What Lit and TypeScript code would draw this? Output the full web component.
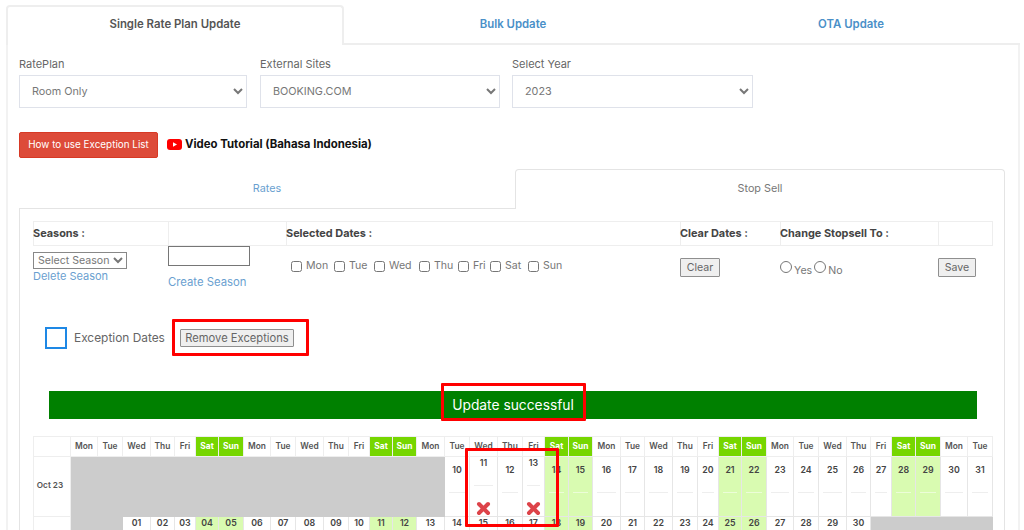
import { LitElement, html, css, svg } from "lit";
import { customElement } from "lit/decorators.js";

const NAMES = ["Mon", "Tue", "Wed", "Thu", "Fri", "Sat", "Sun"];
const WEEK_HEAD = Array.from({ length: 37 }, (_, i) => NAMES[i % 7]);
const isWeekend = (i: number) => i % 7 === 5 || i % 7 === 6;
const pad = (n: number) => String(n).padStart(2, "0");
const cross = svg`<line x1="3" y1="3" x2="12" y2="12"/><line x1="12" y1="3" x2="3" y2="12"/>`;

@customElement("app-root")
export class AppRoot extends LitElement {
  static styles = css`
    :host {
      display: block;
      width: 1024px;
      height: 530px;
      overflow: hidden;
      background: #fff;
      font-family: Inter, "Open Sans", sans-serif;
      color: #666;
      font-size: 11px;
    }
    .page { padding: 5px 4px 0 6px; }
    .tabs { display: flex; height: 40px; }
    .tab {
      flex: 1;
      display: flex;
      align-items: center;
      justify-content: center;
      font-weight: 600;
      font-size: 11.4px;
      color: #4a90c8;
      border-bottom: 2px solid #eee;
      box-sizing: border-box;
    }
    .tab.on {
      flex: 0 0 338px;
      color: #555;
      border: 2px solid #eee;
      border-bottom: 0;
      border-radius: 4px 4px 0 0;
      background: #fff;
      padding-bottom: 4px;
    }
    .panel {
      border-left: 2px solid #f2f2f2;
      border-right: 2px solid #f2f2f2;
      padding: 10px 13px 0 11px;
      height: 490px;
      box-sizing: border-box;
    }
    .form { display: flex; gap: 12px; }
    .field label { display: block; line-height: 18px; font-size: 11px; color: #666; margin-bottom: 2px; }
    .field select {
      display: block;
      height: 33px;
      box-sizing: border-box;
      background: #fff;
      border: 1.5px solid #dfe2ea;
      border-radius: 0;
      padding: 0 8px;
      font: inherit;
      font-size: 10.8px;
      color: #777;
    }
    .w1 { width: 228px; margin-right: 1px; }
    .w2 { width: 240px; }
    .w3 { width: 241px; }
    .help { display: flex; align-items: center; margin-top: 24px; height: 26px; }
    .help button {
      width: 139px;
      height: 26px;
      background: #dd4b39;
      border: 1px solid #d73925;
      border-radius: 2px;
      color: #fff;
      font: inherit;
      font-size: 9.9px;
      padding: 0 0 2px;
    }
    .help svg { margin: 0 3px 2px 9px; flex: none; }
    .video { font-weight: 700; color: #111; font-size: 11.4px; white-space: nowrap; padding-bottom: 2px; }
    .subtabs { display: flex; height: 40px; margin-top: 11px; width: 986px; }
    .sub {
      flex: 0 0 496px;
      display: flex;
      align-items: center;
      justify-content: center;
      box-sizing: border-box;
      color: #6a9fd0;
      font-size: 10.8px;
      border-bottom: 1px solid #e4e4e4;
    }
    .sub.on {
      flex: 0 0 490px;
      color: #777;
      border: 1px solid #e4e4e4;
      border-bottom: 0;
      border-radius: 4px 4px 0 0;
      padding-bottom: 2px;
    }
    .subpanel {
      width: 986px;
      box-sizing: border-box;
      border-left: 1px solid #e4e4e4;
      border-right: 1px solid #e4e4e4;
      padding: 12px 0 0 13px;
      height: 330px;
    }
    .controls {
      display: grid;
      grid-template-columns: 135px 118px 394px 100px 158px 55px;
      grid-template-rows: 25px 73px;
      width: 960px;
    }
    .controls .h {
      border: 1px solid #eee;
      border-right: 0;
      font-weight: 700;
      font-size: 10.9px;
      color: #444;
      display: flex;
      align-items: center;
      white-space: nowrap;
      text-indent: -1px;
      padding-bottom: 1px;
      box-sizing: border-box;
    }
    .controls .h:nth-child(6) { border-right: 1px solid #eee; }
    .seasons { padding-top: 6px; }
    .seasons select {
      display: block;
      width: 94px;
      height: 17px;
      font: inherit;
      font-size: 10.6px;
      color: #777;
      padding: 0;
      border: 1px solid #888;
      border-radius: 0;
      background: #fff;
    }
    a { color: #6a9fd0; font-size: 11px; text-decoration: none; white-space: nowrap; }
    .seasons a { display: block; line-height: 14px; }
    .create input {
      display: block;
      width: 82px;
      height: 20px;
      box-sizing: border-box;
      border: 1px solid #767676;
      padding: 0;
      margin: 0 0 9px;
    }
    .create a { display: block; line-height: 14px; font-size: 11.3px; }
    .days { display: flex; align-items: flex-start; padding: 13px 0 0 5px; font-size: 10.6px; color: #777; }
    .days label { display: flex; align-items: center; gap: 4px; line-height: 14px; }
    .days input { width: 11px; height: 11px; margin: 0; flex: none; }
    .d1 { width: 43px; } .d2 { width: 40px; } .d3 { width: 45px; } .d4 { width: 39px; } .d5 { width: 32px; } .d6 { width: 38px; }
    .plain {
      font: inherit;
      font-size: 10.6px;
      color: #666;
      background: #efefef;
      border: 1px solid #8f8f8f;
      border-radius: 1px;
      padding: 0;
      display: block;
    }
    .clear { padding-top: 12px; }
    .clear .plain { width: 40px; height: 19px; }
    .save { padding-top: 12px; }
    .save .plain { width: 38px; height: 19px; }
    .radios { display: flex; align-items: flex-start; padding-top: 15px; font-size: 10.6px; color: #777; gap: 2px; }
    .radios label { display: flex; align-items: flex-start; gap: 2px; line-height: 14px; }
    .radios span { padding-top: 3px; }
    .radios input { width: 12px; height: 12px; margin: 0; }
    .exception { display: flex; align-items: center; padding-left: 12px; height: 37px; }
    .tick {
      width: 22px;
      height: 22px;
      box-sizing: border-box;
      border: 2px solid #1e88e5;
      flex: none;
    }
    .exception .label { margin-left: 7px; font-size: 11.9px; color: #666; white-space: nowrap; width: 91px; }
    .mark { border: 3px solid #f00; box-sizing: border-box; border-radius: 1px; }
    .remove {
      margin-left: 7px;
      width: 137px;
      height: 37px;
      padding-left: 5px;
      display: flex;
      align-items: center;
    }
    .remove .plain { width: 114px; height: 18px; font-size: 11.2px; white-space: nowrap; }
    .success {
      position: relative;
      margin: 35px 16px 0;
      width: 928px;
      height: 28px;
      background: #008000;
      color: #fff;
      font-size: 13.8px;
      display: flex;
      align-items: center;
      justify-content: center;
    }
    .success .mark { position: absolute; left: 392px; top: -8px; width: 145px; height: 38px; }
    .calendar {
      position: relative;
      margin-top: 17px;
      width: 960px;
      box-sizing: border-box;
      display: grid;
      grid-template-columns:
        37px 27px 25px 28px 24px 21px 23px 25px 27px 25px 28px 25px 21px 23px 24px
        28px 25px 28px 25px 22px 24px 24px 28px 24px 28px 25px 21px 23px 25px
        27px 25px 28px 24px 21px 24px 25px 27px 25px;
      grid-template-rows: 20px 60px 60px;
      border-top: 1px solid #eee;
      border-left: 1px solid #eee;
    }
    .c {
      box-sizing: border-box;
      border-right: 1px solid #e6e6e6;
      border-bottom: 1px solid #e6e6e6;
      text-align: center;
      font-weight: 600;
      font-size: 8.8px;
      color: #444;
      white-space: nowrap;
      overflow: hidden;
    }
    .head { line-height: 19px; color: #555; font-size: 8.4px; border-color: #eee; }
    .head.we { background: #76d600; color: #fff; font-weight: 700; }
    .month { display: flex; align-items: center; justify-content: center; font-size: 8.2px; color: #555; border-color: #eee; padding: 0 4px 4px 0; }
    .none { background: #ccc; border-color: #ccc; }
    .day { padding: 5px 4px 0; line-height: 16px; }
    .day.we { background: #d9fbb1; }
    .day hr { border: 0; border-top: 1px solid #eee; margin: 14px 0 0; }
    .day.we hr { border-top-color: #ecfdd8; }
    .day.x { padding: 0 2px; line-height: 12px; }
    .day.x hr { margin: 16px 2px 0; }
    .day.x svg { display: block; margin: 15px auto 0; stroke: #dd4349; stroke-width: 4; stroke-linecap: round; }
    .day.next { padding-top: 0; line-height: 12px; }
    .calendar .mark { position: absolute; left: 431px; top: 11px; width: 94px; height: 79px; }
  `;

  private renderDay(n: number, we: boolean) {
    const marked = n === 11 || n === 13;
    return html`<div class="c day ${we ? "we" : ""} ${marked ? "x" : ""}">
      ${n}<hr />
      ${marked ? html`<svg width="15" height="15" viewBox="0 0 15 15">${cross}</svg>` : ""}
    </div>`;
  }

  render() {
    const row2 = Array.from({ length: 30 }, (_, i) => i + 1);
    const row1 = Array.from({ length: 22 }, (_, i) => i + 10);
    return html`
      <div class="page">
        <div class="tabs">
          <div class="tab on">Single Rate Plan Update</div>
          <div class="tab">Bulk Update</div>
          <div class="tab">OTA Update</div>
        </div>
        <div class="panel">
          <div class="form">
            <div class="field"><label>RatePlan</label><select class="w1"><option>Room Only</option></select></div>
            <div class="field"><label>External Sites</label><select class="w2"><option>BOOKING.COM</option></select></div>
            <div class="field"><label>Select Year</label><select class="w3"><option>2023</option></select></div>
          </div>
          <div class="help">
            <button>How to use Exception List</button>
            <svg width="15" height="11" viewBox="0 0 15 11">
              <rect width="15" height="11" rx="3" fill="#f00" />
              <path d="M6 3.2 10 5.5 6 7.8Z" fill="#fff" />
            </svg>
            <span class="video">Video Tutorial (Bahasa Indonesia)</span>
          </div>
          <div class="subtabs">
            <div class="sub">Rates</div>
            <div class="sub on">Stop Sell</div>
          </div>
          <div class="subpanel">
            <div class="controls">
              <div class="h">Seasons :</div>
              <div class="h"></div>
              <div class="h">Selected Dates :</div>
              <div class="h">Clear Dates :</div>
              <div class="h">Change Stopsell To :</div>
              <div class="h"></div>
              <div class="seasons">
                <select><option>Select Season</option></select>
                <a>Delete Season</a>
              </div>
              <div class="create"><input type="text" /><a>Create Season</a></div>
              <div class="days">
                <label class="d1"><input type="checkbox" />Mon</label>
                <label class="d2"><input type="checkbox" />Tue</label>
                <label class="d3"><input type="checkbox" />Wed</label>
                <label class="d4"><input type="checkbox" />Thu</label>
                <label class="d5"><input type="checkbox" />Fri</label>
                <label class="d6"><input type="checkbox" />Sat</label>
                <label><input type="checkbox" />Sun</label>
              </div>
              <div class="clear"><button class="plain">Clear</button></div>
              <div class="radios">
                <label><input type="radio" name="s" /><span>Yes</span></label>
                <label><input type="radio" name="s" /><span>No</span></label>
              </div>
              <div class="save"><button class="plain">Save</button></div>
            </div>
            <div class="exception">
              <div class="tick"></div>
              <div class="label">Exception Dates</div>
              <div class="mark remove"><button class="plain">Remove Exceptions</button></div>
            </div>
            <div class="success">
              Update successful
              <div class="mark"></div>
            </div>
            <div class="calendar">
              <div class="c head"></div>
              ${WEEK_HEAD.map((d, i) => html`<div class="c head ${isWeekend(i) ? "we" : ""}">${d}</div>`)}
              <div class="c month">Oct 23</div>
              <div class="c none" style="grid-column: span 15"></div>
              ${row1.map((n, i) => this.renderDay(n, isWeekend(i + 15)))}
              <div class="c month"></div>
              <div class="c none" style="grid-column: span 2"></div>
              ${row2.map(
                (n, i) => html`<div class="c day next ${isWeekend(i + 2) ? "we" : ""}">${pad(n)}</div>`
              )}
              <div class="c none" style="grid-column: span 5"></div>
              <div class="mark"></div>
            </div>
          </div>
        </div>
      </div>
    `;
  }
}
